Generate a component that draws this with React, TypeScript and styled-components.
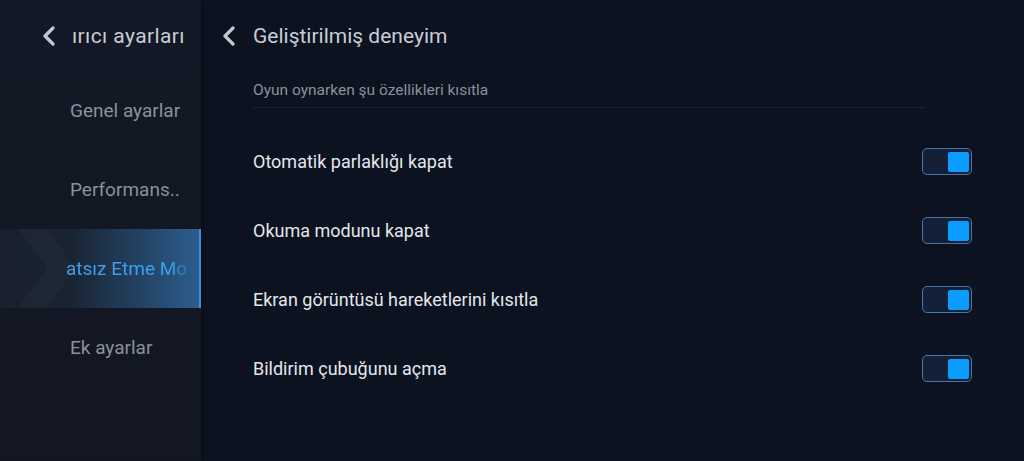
import * as React from "react";
import styled, { createGlobalStyle } from "styled-components";

const GlobalStyle = createGlobalStyle`
  html, body {
    margin: 0;
    padding: 0;
    background: #0c121f;
  }
  body {
    font-family: Roboto, "Noto Sans", "Liberation Sans", sans-serif;
  }
`;

const options = [
  "Otomatik parlaklığı kapat",
  "Okuma modunu kapat",
  "Ekran görüntüsü hareketlerini kısıtla",
  "Bildirim çubuğunu açma",
];

// the sidebar labels are mid-marquee, so only the visible part is shown
const menu = [
  { label: "Genel ayarlar" },
  { label: "Performans.." },
  { label: "atsız Etme Mo", active: true },
  { label: "Ek ayarlar" },
];

function BackIcon() {
  return (
    <svg width="14" height="20" viewBox="0 0 14 20" fill="none">
      <path
        d="M11 2 L3 10 L11 18"
        stroke="#c3c7cf"
        strokeWidth="3.2"
        strokeLinecap="round"
        strokeLinejoin="round"
      />
    </svg>
  );
}

function Toggle({ checked }: { checked: boolean }) {
  return (
    <Track $checked={checked}>
      <Knob $checked={checked} />
    </Track>
  );
}

export default function App() {
  return (
    <>
      <GlobalStyle />
      <Screen>
        <Sidebar>
          <SideHeader>
            <BackIcon />
            <SideTitle>ırıcı ayarları</SideTitle>
          </SideHeader>
          <Menu>
            {menu.map((item) => (
              <MenuItem key={item.label} $active={!!item.active}>
                {item.active && (
                  <Arrow width="90" height="78" viewBox="0 0 90 78">
                    <polygon
                      points="18,0 46,0 76,39 46,78 18,78 48,39"
                      fill="#ffffff"
                      fillOpacity="0.025"
                    />
                  </Arrow>
                )}
                <MenuLabel $active={!!item.active}>{item.label}</MenuLabel>
              </MenuItem>
            ))}
          </Menu>
        </Sidebar>
        <Main>
          <MainHeader>
            <BackIcon />
            <Title>Geliştirilmiş deneyim</Title>
          </MainHeader>
          <Content>
            <Section>Oyun oynarken şu özellikleri kısıtla</Section>
            <List>
              {options.map((label) => (
                <Row key={label}>
                  <RowLabel>{label}</RowLabel>
                  <Toggle checked />
                </Row>
              ))}
            </List>
          </Content>
        </Main>
      </Screen>
    </>
  );
}

const Screen = styled.div`
  display: flex;
  width: 1024px;
  height: 461px;
  overflow: hidden;
  background: #0c121f;
`;

const Sidebar = styled.div`
  width: 201px;
  flex-shrink: 0;
  display: flex;
  flex-direction: column;
  background: linear-gradient(180deg, #121825 0%, #131723 100%);
  box-shadow: 2px 0 4px rgba(0, 0, 0, 0.25);
`;

const SideHeader = styled.div`
  height: 71px;
  display: flex;
  align-items: center;
  padding-left: 42px;
  gap: 16px;
  box-sizing: border-box;
`;

const SideTitle = styled.div`
  white-space: nowrap;
  font-size: 21px;
  letter-spacing: 0.4px;
  color: #c8ccd4;
`;

const Menu = styled.div`
  display: flex;
  flex-direction: column;
`;

const MenuItem = styled.div<{ $active: boolean }>`
  position: relative;
  height: 79px;
  display: flex;
  align-items: center;
  padding-left: ${(p) => (p.$active ? "66px" : "70px")};
  box-sizing: border-box;
  background: ${(p) =>
    p.$active
      ? "linear-gradient(90deg, rgba(30,40,56,0.5) 0%, #192331 35%, #2c5d8d 100%)"
      : "transparent"};
  border-right: 2px solid ${(p) => (p.$active ? "#3b8fdc" : "transparent")};
`;

const Arrow = styled.svg`
  position: absolute;
  left: 0;
  top: 0;
`;

const MenuLabel = styled.div<{ $active: boolean }>`
  position: relative;
  white-space: nowrap;
  font-size: 19px;
  color: ${(p) => (p.$active ? "#3d9ff0" : "#8b9099")};
  mask-image: ${(p) =>
    p.$active
      ? "linear-gradient(90deg, #000 85%, rgba(0,0,0,0.35) 100%)"
      : "none"};
`;

const Main = styled.div`
  flex: 1;
  display: flex;
  flex-direction: column;
`;

const MainHeader = styled.div`
  height: 72px;
  display: flex;
  align-items: center;
  padding-left: 21px;
  gap: 17px;
  box-sizing: border-box;
`;

const Title = styled.div`
  font-size: 21px;
  color: #c9ccd6;
`;

const Content = styled.div`
  padding-left: 52px;
  padding-right: 52px;
  display: flex;
  flex-direction: column;
`;

const Section = styled.div`
  width: 672px;
  height: 36px;
  box-sizing: border-box;
  display: flex;
  align-items: center;
  font-size: 15.5px;
  color: #8a909b;
  border-bottom: 1px solid #1b2230;
`;

const List = styled.div`
  display: flex;
  flex-direction: column;
  padding-top: 19px;
`;

const Row = styled.div`
  height: 69px;
  display: flex;
  align-items: center;
  justify-content: space-between;
`;

const RowLabel = styled.div`
  font-size: 18px;
  color: #e4e7ec;
`;

const Track = styled.div<{ $checked: boolean }>`
  width: 50px;
  height: 27px;
  box-sizing: border-box;
  border: 1.5px solid #4676a8;
  border-radius: 5px;
  background: #132038;
  display: flex;
  align-items: center;
  justify-content: ${(p) => (p.$checked ? "flex-end" : "flex-start")};
  padding: 0 2px;
`;

const Knob = styled.div<{ $checked: boolean }>`
  width: 21px;
  height: 20px;
  border-radius: 2px;
  background: ${(p) => (p.$checked ? "#0a9cff" : "#3a4556")};
`;
